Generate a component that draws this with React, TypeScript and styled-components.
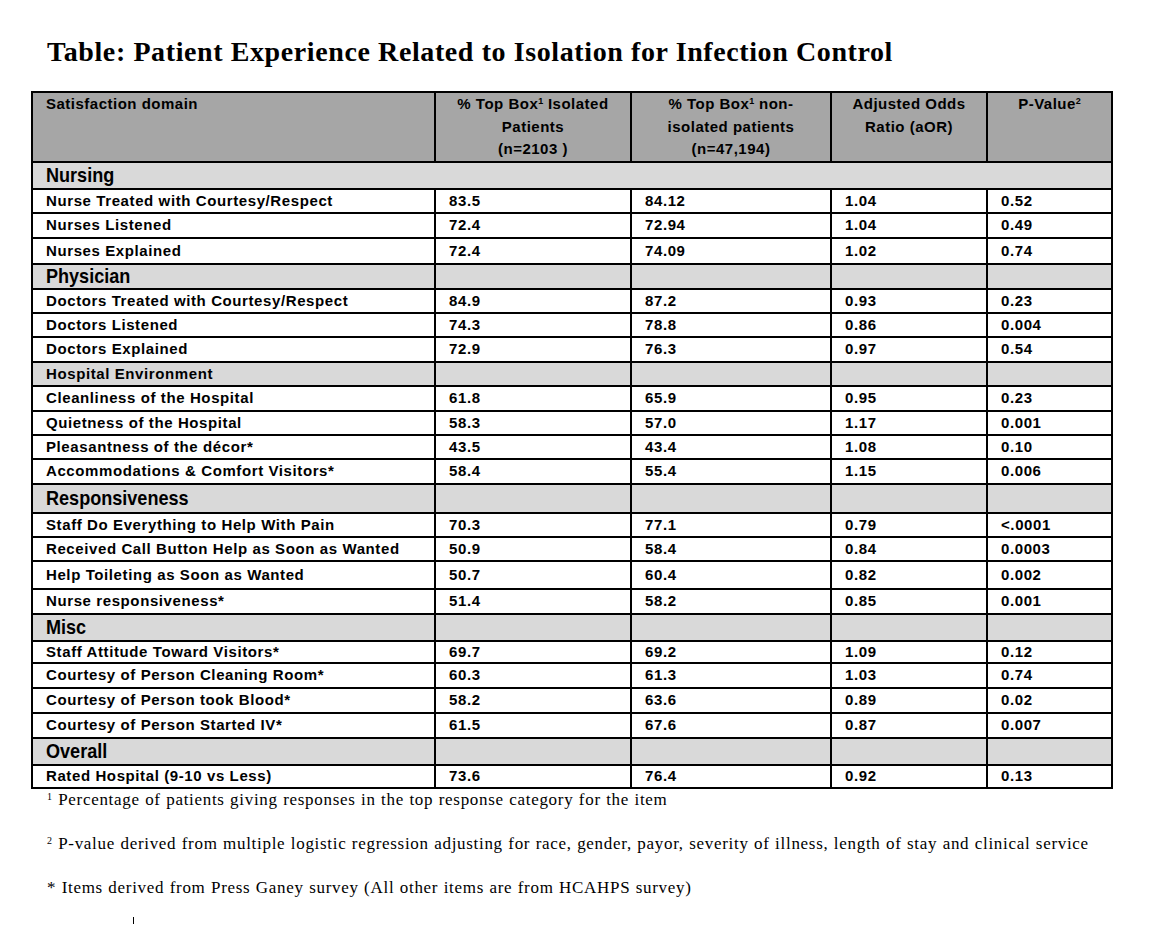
import React from "react";
import styled, { createGlobalStyle } from "styled-components";

const Global = createGlobalStyle`
  html, body { margin: 0; padding: 0; background: #ffffff; }
  body { font-family: "Liberation Sans", Arial, sans-serif; color: #000; }
`;

const Page = styled.div`
  width: 1170px;
  height: 926px;
  box-sizing: border-box;
  padding: 36px 0 0 31px;
  background: #fff;
  overflow: hidden;
`;

const Title = styled.h1`
  margin: 0 0 0 16px;
  font-family: "Liberation Serif", "Times New Roman", serif;
  font-weight: bold;
  font-size: 28px;
  line-height: 32px;
  letter-spacing: 0.6px;
  color: #000;
`;

const Table = styled.table`
  margin-top: 23px;
  width: 1080px;
  table-layout: fixed;
  border-collapse: collapse;
  font-family: "Liberation Sans", Arial, sans-serif;
  font-weight: bold;
  font-size: 15px;
`;

const HeadRow = styled.tr`
  background: #a6a6a6;
  height: 69px;
`;

const HeadCell = styled.th<{ $left?: boolean }>`
  border: 2px solid #000;
  vertical-align: top;
  text-align: ${(p) => (p.$left ? "left" : "center")};
  padding: ${(p) => (p.$left ? "0 0 0 13px" : "0 4px")};
  font-weight: bold;
  font-size: 15px;
  line-height: 22.5px;
  letter-spacing: 0.5px;
`;

const Sup = styled.sup`
  font-size: 9px;
  vertical-align: 5px;
  line-height: 0;
  letter-spacing: 0;
`;

const Row = styled.tr<{ $h: number; $section?: boolean }>`
  height: ${(p) => p.$h}px;
  background: ${(p) => (p.$section ? "#d9d9d9" : "#ffffff")};
`;

const Cell = styled.td`
  border: 2px solid #000;
  padding: 0 4px 0 13px;
  vertical-align: middle;
  white-space: nowrap;
  line-height: 18px;
  font-size: 15px;
  letter-spacing: 0.6px;
  overflow: visible;
`;

const Big = styled.span`
  display: inline-block;
  font-size: 21px;
  letter-spacing: 0;
  line-height: 22px;
  transform: scaleX(0.86);
  transform-origin: left center;
`;

const Notes = styled.div`
  margin: 0 0 0 16px;
  font-family: "Liberation Serif", "Times New Roman", serif;
  font-size: 17px;
  color: #000;
  display: flex;
  flex-direction: column;
  gap: 22px;
`;

const Note = styled.p`
  margin: 0;
  line-height: 22px;
  letter-spacing: 0.7px;
  word-spacing: 0.5px;
`;

const NoteSup = styled.sup`
  font-size: 10px;
  vertical-align: 5px;
  line-height: 0;
`;

const Tick = styled.div`
  margin: 18px 0 0 102px;
  width: 1px;
  height: 7px;
  background: #000;
`;

type Item = {
  kind: "section" | "sectionSmall" | "sectionSpan" | "data";
  label: string;
  h: number;
  v?: [string, string, string, string];
};

const rows: Item[] = [
  { kind: "sectionSpan", label: "Nursing", h: 27 },
  { kind: "data", label: "Nurse Treated with Courtesy/Respect", h: 24, v: ["83.5", "84.12", "1.04", "0.52"] },
  { kind: "data", label: "Nurses Listened", h: 25, v: ["72.4", "72.94", "1.04", "0.49"] },
  { kind: "data", label: "Nurses Explained", h: 26, v: ["72.4", "74.09", "1.02", "0.74"] },
  { kind: "section", label: "Physician", h: 25 },
  { kind: "data", label: "Doctors Treated with Courtesy/Respect", h: 24, v: ["84.9", "87.2", "0.93", "0.23"] },
  { kind: "data", label: "Doctors Listened", h: 24, v: ["74.3", "78.8", "0.86", "0.004"] },
  { kind: "data", label: "Doctors Explained", h: 25, v: ["72.9", "76.3", "0.97", "0.54"] },
  { kind: "sectionSmall", label: "Hospital Environment", h: 24 },
  { kind: "data", label: "Cleanliness of the Hospital", h: 25, v: ["61.8", "65.9", "0.95", "0.23"] },
  { kind: "data", label: "Quietness of the Hospital", h: 24, v: ["58.3", "57.0", "1.17", "0.001"] },
  { kind: "data", label: "Pleasantness of the décor*", h: 24, v: ["43.5", "43.4", "1.08", "0.10"] },
  { kind: "data", label: "Accommodations & Comfort Visitors*", h: 25, v: ["58.4", "55.4", "1.15", "0.006"] },
  { kind: "section", label: "Responsiveness", h: 29 },
  { kind: "data", label: "Staff Do Everything to Help With Pain", h: 24, v: ["70.3", "77.1", "0.79", "<.0001"] },
  { kind: "data", label: "Received Call Button Help as Soon as Wanted", h: 24, v: ["50.9", "58.4", "0.84", "0.0003"] },
  { kind: "data", label: "Help Toileting as Soon as Wanted", h: 28, v: ["50.7", "60.4", "0.82", "0.002"] },
  { kind: "data", label: "Nurse responsiveness*", h: 25, v: ["51.4", "58.2", "0.85", "0.001"] },
  { kind: "section", label: "Misc", h: 27 },
  { kind: "data", label: "Staff Attitude Toward Visitors*", h: 22, v: ["69.7", "69.2", "1.09", "0.12"] },
  { kind: "data", label: "Courtesy of Person Cleaning Room*", h: 25, v: ["60.3", "61.3", "1.03", "0.74"] },
  { kind: "data", label: "Courtesy of Person took Blood*", h: 25, v: ["58.2", "63.6", "0.89", "0.02"] },
  { kind: "data", label: "Courtesy of Person Started IV*", h: 25, v: ["61.5", "67.6", "0.87", "0.007"] },
  { kind: "section", label: "Overall", h: 27 },
  { kind: "data", label: "Rated Hospital (9-10 vs Less)", h: 23, v: ["73.6", "76.4", "0.92", "0.13"] },
];

export default function App() {
  return (
    <Page>
      <Global />
      <Title>Table: Patient Experience Related to Isolation for Infection Control</Title>
      <Table>
        <colgroup>
          <col style={{ width: 403 }} />
          <col style={{ width: 196 }} />
          <col style={{ width: 200 }} />
          <col style={{ width: 156 }} />
          <col style={{ width: 125 }} />
        </colgroup>
        <thead>
          <HeadRow>
            <HeadCell $left>Satisfaction domain</HeadCell>
            <HeadCell>
              % Top Box<Sup>1</Sup> Isolated
              <br />
              Patients
              <br />
              (n=2103 )
            </HeadCell>
            <HeadCell>
              % Top Box<Sup>1</Sup> non-
              <br />
              isolated patients
              <br />
              (n=47,194)
            </HeadCell>
            <HeadCell>
              Adjusted Odds
              <br />
              Ratio (aOR)
            </HeadCell>
            <HeadCell>
              P-Value<Sup>2</Sup>
            </HeadCell>
          </HeadRow>
        </thead>
        <tbody>
          {rows.map((r, i) => {
            if (r.kind === "sectionSpan") {
              return (
                <Row key={i} $h={r.h} $section>
                  <Cell colSpan={5}>
                    <Big>{r.label}</Big>
                  </Cell>
                </Row>
              );
            }
            if (r.kind === "section" || r.kind === "sectionSmall") {
              return (
                <Row key={i} $h={r.h} $section>
                  <Cell>{r.kind === "section" ? <Big>{r.label}</Big> : r.label}</Cell>
                  <Cell />
                  <Cell />
                  <Cell />
                  <Cell />
                </Row>
              );
            }
            return (
              <Row key={i} $h={r.h}>
                <Cell>{r.label}</Cell>
                {r.v!.map((x, j) => (
                  <Cell key={j}>{x}</Cell>
                ))}
              </Row>
            );
          })}
        </tbody>
      </Table>
      <Notes>
        <Note>
          <NoteSup>1</NoteSup> Percentage of patients giving responses in the top response category for the item
        </Note>
        <Note>
          <NoteSup>2</NoteSup> P-value derived from multiple logistic regression adjusting for race, gender, payor, severity of illness, length of stay and clinical service
        </Note>
        <Note>* Items derived from Press Ganey survey (All other items are from HCAHPS survey)</Note>
      </Notes>
      <Tick />
    </Page>
  );
}
